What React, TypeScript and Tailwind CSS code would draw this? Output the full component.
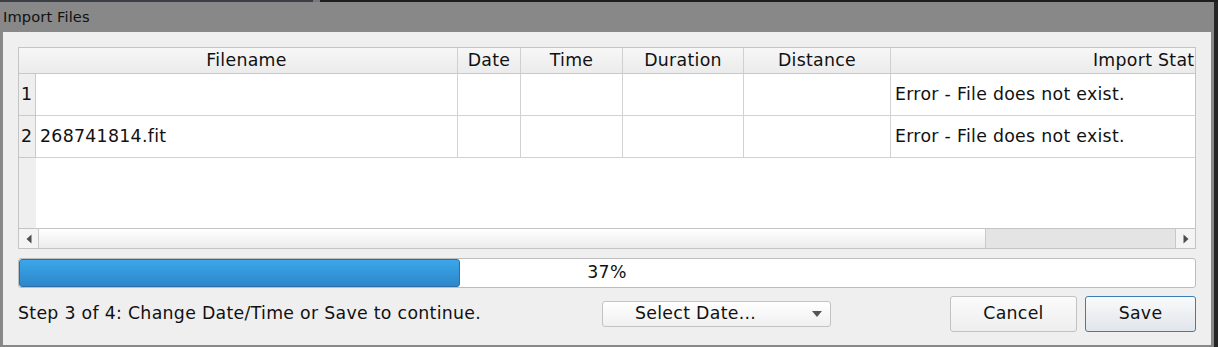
import React from "react";

const cols = [
  { label: "Filename", w: "w-[422px]" },
  { label: "Date", w: "w-[63px]" },
  { label: "Time", w: "w-[102px]" },
  { label: "Duration", w: "w-[121px]" },
  { label: "Distance", w: "w-[147px]" },
];

function Row({ n, file }: { n: string; file: string }) {
  return (
    <div className="flex h-[42px] shrink-0">
      <div className="w-[17px] shrink-0 bg-[#efefef] border-r border-b border-[#c9c9c9] flex items-center pl-[2px]">
        {n}
      </div>
      <div className="w-[422px] shrink-0 bg-white border-r border-b border-[#d2d2d2] flex items-center pl-[4px]">
        {file}
      </div>
      <div className="w-[63px] shrink-0 bg-white border-r border-b border-[#d2d2d2]" />
      <div className="w-[102px] shrink-0 bg-white border-r border-b border-[#d2d2d2]" />
      <div className="w-[121px] shrink-0 bg-white border-r border-b border-[#d2d2d2]" />
      <div className="w-[147px] shrink-0 bg-white border-r border-b border-[#d2d2d2]" />
      <div className="w-[526px] shrink-0 bg-white border-b border-[#d2d2d2] flex items-center pl-[4px]">
        Error - File does not exist.
      </div>
    </div>
  );
}

export default function App() {
  return (
    <div
      className="w-[1218px] h-[347px] overflow-hidden flex flex-col bg-[#262626] text-[#111111]"
      style={{ fontFamily: '"DejaVu Sans", "Liberation Sans", sans-serif' }}
    >
      <div className="flex h-[2px] shrink-0">
        <div className="w-[313px] bg-[#3c4046]" />
        <div className="w-[7px] bg-[#77787c]" />
        <div className="flex-1 bg-[#1e1e1e]" />
      </div>
      <div className="flex flex-1 min-h-0">
        <div className="w-[1214px] bg-[#888888] flex flex-col">
          <div className="h-[30px] shrink-0 flex items-center pl-[3px] text-[14.67px] tracking-[0.1px] text-[#111]">
            Import Files
          </div>
          <div className="mx-[3px] h-[313px] bg-[#efefef] px-[15px] pt-[15px] flex flex-col text-[17.33px] tracking-[0.3px]">
            {/* Table */}
            <div className="h-[202px] shrink-0 border border-[#c4c4c4] flex flex-col overflow-hidden bg-white">
              {/* Header */}
              <div className="flex h-[26px] shrink-0 bg-gradient-to-b from-[#f7f7f7] to-[#ebebeb] border-b border-[#c9c9c9]">
                <div className="w-[17px] shrink-0" />
                {cols.map((c) => (
                  <div
                    key={c.label}
                    className={`${c.w} shrink-0 border-r border-[#d0d0d0] flex items-center justify-center`}
                  >
                    {c.label}
                  </div>
                ))}
                <div className="w-[526px] shrink-0 flex items-center justify-center">
                  Import Status
                </div>
              </div>
              <Row n="1" file="" />
              <Row n="2" file="268741814.fit" />
              <div className="flex h-[70px] shrink-0">
                <div className="w-[17px] shrink-0 bg-[#efefef]" />
                <div className="flex-1 bg-white" />
              </div>
              {/* Scrollbar */}
              <div className="flex h-[20px] shrink-0 border-t border-[#c4c4c4] bg-[#e4e4e4]">
                <div className="w-[20px] shrink-0 border-r border-[#c8c8c8] bg-[#f4f4f4] flex items-center justify-center">
                  <svg width="6" height="10" viewBox="0 0 6 10">
                    <path d="M5.5 0.5 L0.5 5 L5.5 9.5 Z" fill="#4d4d4d" />
                  </svg>
                </div>
                <div className="w-[947px] shrink-0 border-r border-[#c8c8c8] bg-gradient-to-b from-[#ffffff] to-[#ececec]" />
                <div className="flex-1" />
                <div className="w-[20px] shrink-0 border-l border-[#c8c8c8] bg-[#f4f4f4] flex items-center justify-center">
                  <svg width="6" height="10" viewBox="0 0 6 10">
                    <path d="M0.5 0.5 L5.5 5 L0.5 9.5 Z" fill="#4d4d4d" />
                  </svg>
                </div>
              </div>
            </div>
            {/* Progress */}
            <div className="mt-[9px] h-[30px] shrink-0 relative rounded-[3px] border border-[#bdbdbd] bg-white overflow-hidden">
              <div className="absolute left-0 top-0 bottom-0 w-[441px] rounded-[3px] border border-[#2a6fa8] bg-gradient-to-b from-[#3ba6ea] to-[#2d87cb]" />
              <div className="absolute inset-0 flex items-center justify-center">37%</div>
            </div>
            {/* Bottom row */}
            <div className="mt-[8px] h-[36px] shrink-0 flex items-center">
              <div className="w-[584px] shrink-0 whitespace-nowrap">Step 3 of 4: Change Date/Time or Save to continue.</div>
              <div className="w-[229px] h-[26px] shrink-0 rounded-[3px] border border-[#c2c2c2] bg-gradient-to-b from-[#ffffff] to-[#f0f0f0] flex items-center pl-[32px] pr-[8px]">
                <span className="flex-1">Select Date...</span>
                <svg width="10" height="6" viewBox="0 0 10 6">
                  <path d="M0 0 L10 0 L5 6 Z" fill="#555" />
                </svg>
              </div>
              <div className="flex-1" />
              <div className="w-[127px] h-[36px] shrink-0 rounded-[3px] border border-[#c2c2c2] bg-gradient-to-b from-[#fbfbfb] to-[#eeeeee] flex items-center justify-center">
                Cancel
              </div>
              <div className="ml-[8px] w-[111px] h-[36px] shrink-0 rounded-[3px] border border-[#3b7eb6] bg-gradient-to-b from-[#f9fafb] to-[#e1e6eb] flex items-center justify-center">
                Save
              </div>
            </div>
          </div>
        </div>
        <div className="flex-1 bg-[#262626]" />
      </div>
    </div>
  );
}
